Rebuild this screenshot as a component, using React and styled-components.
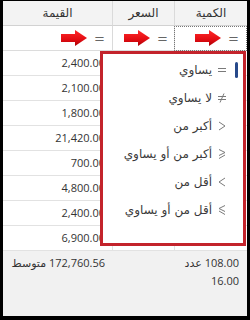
import styled, { createGlobalStyle } from "styled-components";

const GlobalStyle = createGlobalStyle`
  html, body {
    margin: 0;
    padding: 0;
    background: #ffffff;
  }
  body {
    font-family: "Open Sans", "DejaVu Sans", sans-serif;
  }
`;

// price / qty of the rows under the open menu are not visible
const rows = [
  { value: "2,400.00" },
  { value: "2,100.00" },
  { value: "1,800.00" },
  { value: "21,420.00" },
  { value: "700.00" },
  { value: "4,800.00" },
  { value: "2,400.00" },
  { value: "6,900.00", price: "300.00", qty: "23.00" },
];

// padding-right for each column, right-to-left order
const pads = [8, 6, 7];

const Frame = styled.div`
  position: relative;
  width: 250px;
  height: 320px;
  box-sizing: border-box;
  border-style: solid;
  border-color: #000;
  border-width: 1px 3px 4px 3px;
  background: #fff;
  overflow: hidden;
`;

const Table = styled.div`
  display: grid;
  direction: rtl;
  grid-template-columns: 73px 62px 1fr;
`;

const HeadCell = styled.div`
  height: 24px;
  display: flex;
  align-items: center;
  justify-content: center;
  background: #f3f3f3;
  border-bottom: 1px solid #d2d2d2;
  border-left: ${(p) => (p.$last ? "none" : "1px solid #dadada")};
  font-family: "DejaVu Sans", sans-serif;
  font-size: 12px;
  color: #333;
`;

const FilterCell = styled.div`
  height: 24px;
  display: flex;
  align-items: center;
  gap: 7px;
  padding-right: ${(p) => p.$pad}px;
  background: #fff;
  border-bottom: 1px solid #dcdcdc;
  border-left: ${(p) => (p.$last ? "none" : "1px solid #dadada")};
  outline: ${(p) => (p.$focused ? "1px dotted #777" : "none")};
  outline-offset: -1px;
`;

const Equal = styled.span`
  font-family: "DejaVu Sans", sans-serif;
  font-size: 13px;
  line-height: 1;
  color: #666;
`;

const Cell = styled.div`
  height: 24px;
  line-height: 24px;
  padding-right: ${(p) => p.$pad}px;
  text-align: right;
  white-space: nowrap;
  overflow: hidden;
  border-bottom: 1px solid #e2e2e2;
  border-left: ${(p) => (p.$last ? "none" : "1px solid #e2e2e2")};
  font-size: 11px;
  color: #333;
`;

const Footer = styled.div`
  display: grid;
  direction: rtl;
  grid-template-columns: 73px 62px 1fr;
  height: 65px;
  background: #f1f1f1;
`;

const FootCell = styled.div`
  padding-top: 3px;
  padding-right: ${(p) => p.$pad}px;
  font-size: 11px;
  line-height: 17px;
  color: #333;
  text-align: right;
  white-space: nowrap;
`;

const Word = styled.span`
  font-family: "DejaVu Sans", sans-serif;
  font-size: 11px;
`;

const Popup = styled.div`
  position: absolute;
  left: 97px;
  top: 50px;
  width: 146px;
  height: 195px;
  box-sizing: border-box;
  border: 3px solid #c3232b;
  background: #fff;
  padding-top: 2px;
  direction: rtl;
`;

const Item = styled.div`
  height: 28px;
  display: flex;
  align-items: center;
  padding-right: 5px;
`;

const Marker = styled.span`
  width: 3px;
  height: 16px;
  border-radius: 2px;
  background: ${(p) => (p.$on ? "#27498a" : "transparent")};
`;

const Sym = styled.span`
  width: 14px;
  height: 10px;
  margin-right: 6px;
  display: flex;
  direction: ltr;
`;

const Label = styled.span`
  margin-right: 3px;
  font-family: "DejaVu Sans", sans-serif;
  font-size: 12px;
  color: #3a3a3a;
  white-space: nowrap;
`;

const Arrow = () => (
  <svg width="26" height="16" viewBox="0 0 26 16">
    <defs>
      <linearGradient id="ar" x1="0" y1="0" x2="0" y2="1">
        <stop offset="0" stopColor="#ff2a2a" />
        <stop offset="0.6" stopColor="#e30c12" />
        <stop offset="1" stopColor="#a80006" />
      </linearGradient>
    </defs>
    <path d="M0 4 H14 V0 L26 8 L14 16 V12 H0 Z" fill="url(#ar)" />
  </svg>
);

const symbols = {
  eq: (
    <>
      <line x1="3" y1="3.5" x2="11" y2="3.5" />
      <line x1="3" y1="6.5" x2="11" y2="6.5" />
    </>
  ),
  ne: (
    <>
      <line x1="3" y1="3.5" x2="11" y2="3.5" />
      <line x1="3" y1="6.5" x2="11" y2="6.5" />
      <line x1="9" y1="0.5" x2="5" y2="9.5" />
    </>
  ),
  gt: <polyline points="4,1 10,5 4,9" fill="none" />,
  ge: (
    <>
      <polyline points="4,0.5 10,3.5 4,6.5" fill="none" />
      <line x1="10" y1="6" x2="4" y2="9.5" />
    </>
  ),
  lt: <polyline points="10,1 4,5 10,9" fill="none" />,
  le: (
    <>
      <polyline points="10,0.5 4,3.5 10,6.5" fill="none" />
      <line x1="4" y1="6" x2="10" y2="9.5" />
    </>
  ),
};

const menu = [
  { sym: "eq", text: "يساوي", on: true },
  { sym: "ne", text: "لا يساوي" },
  { sym: "gt", text: "أكبر من" },
  { sym: "ge", text: "أكبر من أو يساوي" },
  { sym: "lt", text: "أقل من" },
  { sym: "le", text: "أقل من أو يساوي" },
];

const headers = ["الكمية", "السعر", "القيمة"];

export default function App() {
  return (
    <>
      <GlobalStyle />
      <Frame>
        <Table>
          {headers.map((h, i) => (
            <HeadCell key={h} $last={i === 2}>
              {h}
            </HeadCell>
          ))}
          {headers.map((h, i) => (
            <FilterCell key={"f" + h} $pad={pads[i]} $last={i === 2} $focused={i === 0}>
              <Equal>=</Equal>
              <Arrow />
            </FilterCell>
          ))}
          {rows.flatMap((r, idx) => [
            <Cell key={"q" + idx} $pad={pads[0]}>{r.qty}</Cell>,
            <Cell key={"p" + idx} $pad={pads[1]}>{r.price}</Cell>,
            <Cell key={"v" + idx} $pad={pads[2]} $last>{r.value}</Cell>,
          ])}
        </Table>
        <Footer>
          <FootCell $pad={pads[0]}>
            108.00 <Word>عدد</Word>
            <br />
            16.00
          </FootCell>
          <FootCell $pad={pads[1]} />
          <FootCell $pad={pads[2]}>
            172,760.56 <Word>متوسط</Word>
          </FootCell>
        </Footer>
        <Popup>
          {menu.map((m) => (
            <Item key={m.sym}>
              <Marker $on={m.on} />
              <Sym>
                <svg width="14" height="10" viewBox="0 0 14 10" stroke="#7a7a7a" strokeWidth="1">
                  {symbols[m.sym]}
                </svg>
              </Sym>
              <Label>{m.text}</Label>
            </Item>
          ))}
        </Popup>
      </Frame>
    </>
  );
}
